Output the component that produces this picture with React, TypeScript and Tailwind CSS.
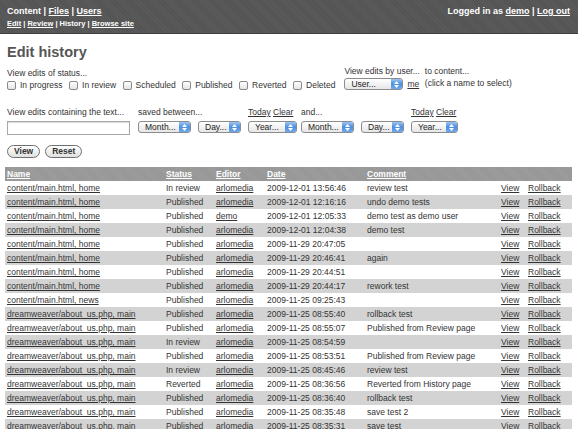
import React from "react"

type Row = {
  name: string
  status: string
  editor: string
  date: string
  comment: string
}

const HOME = "content/main.html, home"
const DW = "dreamweaver/about_us.php, main"

const ROWS: Row[] = [
  { name: HOME, status: "In review", editor: "arlomedia", date: "2009-12-01 13:56:46", comment: "review test" },
  { name: HOME, status: "Published", editor: "arlomedia", date: "2009-12-01 12:16:16", comment: "undo demo tests" },
  { name: HOME, status: "Published", editor: "demo", date: "2009-12-01 12:05:33", comment: "demo test as demo user" },
  { name: HOME, status: "Published", editor: "arlomedia", date: "2009-12-01 12:04:38", comment: "demo test" },
  { name: HOME, status: "Published", editor: "arlomedia", date: "2009-11-29 20:47:05", comment: "" },
  { name: HOME, status: "Published", editor: "arlomedia", date: "2009-11-29 20:46:41", comment: "again" },
  { name: HOME, status: "Published", editor: "arlomedia", date: "2009-11-29 20:44:51", comment: "" },
  { name: HOME, status: "Published", editor: "arlomedia", date: "2009-11-29 20:44:17", comment: "rework test" },
  { name: "content/main.html, news", status: "Published", editor: "arlomedia", date: "2009-11-25 09:25:43", comment: "" },
  { name: DW, status: "Published", editor: "arlomedia", date: "2009-11-25 08:55:40", comment: "rollback test" },
  { name: DW, status: "Published", editor: "arlomedia", date: "2009-11-25 08:55:07", comment: "Published from Review page" },
  { name: DW, status: "In review", editor: "arlomedia", date: "2009-11-25 08:54:59", comment: "" },
  { name: DW, status: "Published", editor: "arlomedia", date: "2009-11-25 08:53:51", comment: "Published from Review page" },
  { name: DW, status: "In review", editor: "arlomedia", date: "2009-11-25 08:45:46", comment: "review test" },
  { name: DW, status: "Reverted", editor: "arlomedia", date: "2009-11-25 08:36:56", comment: "Reverted from History page" },
  { name: DW, status: "Published", editor: "arlomedia", date: "2009-11-25 08:36:40", comment: "rollback test" },
  { name: DW, status: "Published", editor: "arlomedia", date: "2009-11-25 08:35:48", comment: "save test 2" },
  { name: DW, status: "Published", editor: "arlomedia", date: "2009-11-25 08:35:31", comment: "save test" },
]

const STATUSES = ["In progress", "In review", "Scheduled", "Published", "Reverted", "Deleted"]

function Checkbox({ label }: { label: string }) {
  return (
    <label className="flex items-center gap-[4px]">
      <span className="block size-[9px] rounded-[2px] border border-[#8a8a8a] bg-gradient-to-b from-white to-[#e4e4e4]" />
      <span>{label}</span>
    </label>
  )
}

function Select({ label, width }: { label: string; width: string }) {
  return (
    <div
      className={`flex h-[12px] ${width} items-stretch overflow-hidden rounded-[3px] border border-[#8c8c8c] bg-gradient-to-b from-white to-[#e6e6e6] text-[8.5px] leading-[10px]`}
    >
      <span className="flex-1 pl-[6px] text-[#222]">{label}</span>
      <span className="flex w-[11px] flex-col items-center justify-center gap-[1px] bg-gradient-to-b from-[#9cc4f2] via-[#4d8fe0] to-[#6fa8ee]">
        <svg width="5" height="3" viewBox="0 0 5 3">
          <path d="M0 3 L2.5 0 L5 3 Z" fill="#fff" />
        </svg>
        <svg width="5" height="3" viewBox="0 0 5 3">
          <path d="M0 0 L2.5 3 L5 0 Z" fill="#fff" />
        </svg>
      </span>
    </div>
  )
}

function PillButton({ label }: { label: string }) {
  return (
    <button
      type="button"
      className="h-[13px] rounded-full border border-[#6f6f6f] bg-gradient-to-b from-white to-[#e0e0e0] px-[6px] text-[8.5px] font-bold leading-[11px] text-[#333]"
    >
      {label}
    </button>
  )
}

export default function App() {
  return (
    <div
      className="min-h-[429px] w-[578px] overflow-hidden bg-white text-[#333]"
      style={{ fontFamily: '"Liberation Sans", Arial, sans-serif' }}
    >
      <header className="flex h-[34px] items-start justify-between border-b border-[#3f3f3f] bg-[#575757] bg-[repeating-linear-gradient(45deg,#5b5b5b_0px,#5b5b5b_1px,#535353_1px,#535353_2px)] px-[7px] pt-[4px] text-white">
        <div className="flex flex-col">
          <div className="text-[9px] font-bold leading-[14px]">
            Content | <span className="underline">Files</span> | <span className="underline">Users</span>
          </div>
          <div className="text-[7.5px] font-bold leading-[11px]">
            <span className="underline">Edit</span> | <span className="underline">Review</span> | History |{" "}
            <span className="underline">Browse site</span>
          </div>
        </div>
        <div className="pr-[1px] text-[9px] font-bold leading-[14px]">
          Logged in as <span className="underline">demo</span> | <span className="underline">Log out</span>
        </div>
      </header>

      <main className="px-[7px] text-[8.5px] leading-[11px]">
        <h1 className="pt-[9px] text-[14.5px] font-bold leading-[18px] text-[#555]">Edit history</h1>

        <div className="mt-[7px] flex items-start">
          <div className="flex flex-col">
            <span>View edits of status...</span>
            <div className="mt-[1px] flex gap-[6.5px]">
              {STATUSES.map((s) => (
                <Checkbox key={s} label={s} />
              ))}
            </div>
          </div>
          <div className="ml-[9px] flex flex-col">
            <span className="-mt-[2px]">View edits by user...</span>
            <div className="mt-[1px] flex items-center gap-[4px]">
              <Select label="User..." width="w-[59px]" />
              <span className="underline">me</span>
            </div>
          </div>
          <div className="ml-[5px] flex flex-col">
            <span className="-mt-[2px]">to content...</span>
            <span className="mt-[1px]">(click a name to select)</span>
          </div>
        </div>

        <div className="mt-[16px] flex items-start">
          <div className="flex w-[131px] flex-col">
            <span>View edits containing the text...</span>
            <div className="mt-[3px] h-[14px] w-[123px] border border-[#a8a8a8] bg-white shadow-[inset_0_1px_1px_rgba(0,0,0,0.15)]" />
          </div>
          <div className="flex flex-col">
            <span>saved between...</span>
            <div className="mt-[3px] flex gap-[7px]">
              <Select label="Month..." width="w-[53px]" />
              <Select label="Day..." width="w-[43px]" />
            </div>
          </div>
          <div className="ml-[7px] flex flex-col">
            <span>
              <span className="underline">Today</span> <span className="underline">Clear</span>
            </span>
            <div className="mt-[3px]">
              <Select label="Year..." width="w-[49px]" />
            </div>
          </div>
          <div className="ml-[4px] flex flex-col">
            <span>and...</span>
            <div className="mt-[3px] flex gap-[7px]">
              <Select label="Month..." width="w-[53px]" />
              <Select label="Day..." width="w-[43px]" />
            </div>
          </div>
          <div className="ml-[7px] flex flex-col">
            <span>
              <span className="underline">Today</span> <span className="underline">Clear</span>
            </span>
            <div className="mt-[3px]">
              <Select label="Year..." width="w-[47px]" />
            </div>
          </div>
        </div>

        <div className="mt-[10px] flex gap-[5px]">
          <PillButton label="View" />
          <PillButton label="Reset" />
        </div>
      </main>

      <table className="ml-[5px] mt-[9px] w-[567px] table-fixed border-collapse text-[8.5px] leading-[14px] text-[#333]">
        <colgroup>
          <col className="w-[159px]" />
          <col className="w-[50px]" />
          <col className="w-[51px]" />
          <col className="w-[100px]" />
          <col className="w-[134px]" />
          <col className="w-[27px]" />
          <col className="w-[46px]" />
        </colgroup>
        <thead>
          <tr className="h-[14px] bg-[#999] bg-[repeating-linear-gradient(45deg,#9d9d9d_0px,#9d9d9d_1px,#969696_1px,#969696_2px)] text-left font-bold text-white">
            <th className="pl-[2px] underline">Name</th>
            <th className="pl-[2px] underline">Status</th>
            <th className="pl-[2px] underline">Editor</th>
            <th className="pl-[2px] underline">Date</th>
            <th className="pl-[2px] underline">Comment</th>
            <th />
            <th />
          </tr>
        </thead>
        <tbody>
          {ROWS.map((r, i) => (
            <tr key={i} className={`h-[14px] ${i % 2 === 1 ? "bg-[#d3d3d3]" : "bg-white"}`}>
              <td className="whitespace-nowrap pl-[2px] underline">{r.name}</td>
              <td className="whitespace-nowrap pl-[2px]">{r.status}</td>
              <td className="whitespace-nowrap pl-[2px] underline">{r.editor}</td>
              <td className="whitespace-nowrap pl-[2px]">{r.date}</td>
              <td className="whitespace-nowrap pl-[2px]">{r.comment}</td>
              <td className="pl-[2px] underline">View</td>
              <td className="pl-[2px] underline">Rollback</td>
            </tr>
          ))}
        </tbody>
      </table>
    </div>
  )
}
